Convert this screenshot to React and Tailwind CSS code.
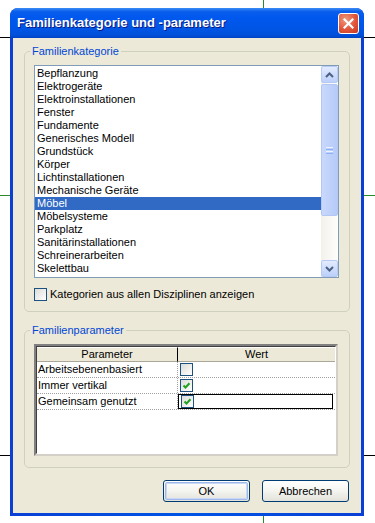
import React from 'react'

const categories = [
  'Bepflanzung',
  'Elektrogeräte',
  'Elektroinstallationen',
  'Fenster',
  'Fundamente',
  'Generisches Modell',
  'Grundstück',
  'Körper',
  'Lichtinstallationen',
  'Mechanische Geräte',
  'Möbel',
  'Möbelsysteme',
  'Parkplatz',
  'Sanitärinstallationen',
  'Schreinerarbeiten',
  'Skelettbau',
]

const params = [
  { name: 'Arbeitsebenenbasiert', checked: false },
  { name: 'Immer vertikal', checked: true },
  { name: 'Gemeinsam genutzt', checked: true, active: true },
]

function CheckBox({ checked }) {
  return (
    <div className="w-[13px] h-[13px] border border-[#1C5180] bg-gradient-to-br from-[#DCDCD7] to-white flex items-center justify-center shrink-0">
      {checked && (
        <svg width="11" height="11" viewBox="0 0 11 11">
          <path d="M2.5 5.5 L4.5 7.5 L8.5 3.2" fill="none" stroke="#21A121" strokeWidth="2" />
        </svg>
      )}
    </div>
  )
}

function ScrollButton({ down }) {
  return (
    <div className="w-[17px] h-[17px] rounded-[2px] border border-[#B7CAF5] bg-gradient-to-b from-[#E3EBFE] to-[#BCD0FA] flex items-center justify-center">
      <svg width="9" height="6" viewBox="0 0 9 6">
        <path d={down ? 'M1 1 L4.5 4.5 L8 1' : 'M1 5 L4.5 1.5 L8 5'} fill="none" stroke="#4D6185" strokeWidth="2" />
      </svg>
    </div>
  )
}

function XpButton({ children, isDefault }) {
  return (
    <button className="w-[87px] h-[22px] rounded-[3px] border border-[#003C74] bg-gradient-to-b from-white via-[#F4F4F0] to-[#E3E2DA] text-[11px] text-black p-[1px]">
      <div className={`w-full h-full rounded-[2px] flex items-center justify-center ${isDefault ? 'border border-[#9DB9EB] shadow-[inset_0_0_0_1px_#C8D7F5]' : ''}`}>
        {children}
      </div>
    </button>
  )
}

export default function App() {
  return (
    <div className="relative w-[375px] h-[523px] bg-white overflow-hidden pt-[8px] pl-[10px] font-['Liberation_Sans',Arial,sans-serif]">
      {/* Zeichenfläche im Hintergrund */}
      <div className="absolute left-0 right-0 top-[37px] h-px bg-black" />
      <div className="absolute left-0 right-0 top-[455px] h-px bg-black" />
      <div className="absolute left-0 right-0 top-[195px] h-px bg-[#2A8A2A]" />
      <div className="absolute top-0 bottom-0 left-[263px] w-px bg-[#2A8A2A]" />

      <div className="relative z-10 w-[354px] h-[508px] flex flex-col rounded-t-[8px] overflow-hidden bg-gradient-to-r from-[#0A3FD6] via-[#0055E5] to-[#0A3FD6]">
        {/* Titelleiste */}
        <div className="h-[30px] shrink-0 flex items-center justify-between pl-[7px] pr-[5px] bg-[linear-gradient(to_bottom,#3C8CF6_0%,#0A5EEC_12%,#0058EE_30%,#0055E5_70%,#0050D8_90%,#0043C4_100%)]">
          <span className="text-white text-[13px] font-bold [text-shadow:1px_1px_0_#0A1883]">
            Familienkategorie und -parameter
          </span>
          <div className="w-[21px] h-[21px] rounded-[3px] border border-white bg-[radial-gradient(circle_at_35%_30%,#F09A7C,#E0553A_55%,#C8391E)] flex items-center justify-center">
            <svg width="11" height="11" viewBox="0 0 11 11">
              <path d="M1.5 1.5 L9.5 9.5 M9.5 1.5 L1.5 9.5" stroke="white" strokeWidth="2.2" strokeLinecap="square" />
            </svg>
          </div>
        </div>

        {/* Inhalt */}
        <div className="flex-1 mx-[3px] mb-[3px] bg-[#ECE9D8] px-[11px] pt-[7px] flex flex-col">
          <fieldset className="border border-[#D0D0BF] rounded-[5px] pl-[9px] pr-[10px] pb-[10px]">
            <legend className="ml-[-4px] px-[2px] text-[11px] leading-[13px] text-[#0046D5]">Familienkategorie</legend>
            <div className="mt-[7px] h-[213px] border border-[#7F9DB9] bg-white flex">
              <div className="flex-1 pt-[1px]">
                {categories.map((c) => (
                  <div
                    key={c}
                    className={`h-[13px] leading-[13px] pl-[2px] text-[11px] ${c === 'Möbel' ? 'bg-[#316AC5] text-white' : 'text-black'}`}
                  >
                    {c}
                  </div>
                ))}
              </div>
              <div className="w-[17px] flex flex-col bg-gradient-to-r from-[#F3F1EC] to-[#FEFEFB]">
                <ScrollButton />
                <div className="mt-[1px] h-[132px] rounded-[2px] border border-[#B2C7F4] bg-gradient-to-r from-[#C9D8FC] to-[#B6CBF9] flex flex-col items-center justify-center gap-[1px]">
                  <div className="w-[7px] h-px bg-[#EEF4FE]" />
                  <div className="w-[7px] h-px bg-[#8CB0F8]" />
                  <div className="w-[7px] h-px bg-[#EEF4FE]" />
                  <div className="w-[7px] h-px bg-[#8CB0F8]" />
                </div>
                <div className="flex-1" />
                <ScrollButton down />
              </div>
            </div>
            <div className="mt-[10px] flex items-center gap-[3px]">
              <CheckBox />
              <span className="text-[11px] leading-[13px] text-black">Kategorien aus allen Disziplinen anzeigen</span>
            </div>
          </fieldset>

          <fieldset className="mt-[12px] border border-[#D0D0BF] rounded-[5px] pl-[9px] pr-[11px] pb-[11px]">
            <legend className="ml-[-4px] px-[2px] text-[11px] leading-[13px] text-[#0046D5]">Familienparameter</legend>
            <div className="mt-[7px] h-[112px] border-2 border-t-[#808080] border-l-[#808080] border-r-[#D4D0C8] border-b-[#D4D0C8] bg-white">
              <div className="h-full border border-t-[#404040] border-l-[#404040] border-r-white border-b-white">
                <div className="h-[15px] flex text-[11px] leading-[13px] text-black bg-[#ECE9D8]">
                  <div className="w-[141px] flex items-center justify-center border-t border-t-white border-b border-b-[#ACA899] border-r border-r-black">
                    Parameter
                  </div>
                  <div className="flex-1 flex items-center justify-center border-t border-t-white border-b border-b-[#ACA899]">
                    Wert
                  </div>
                </div>
                {params.map((p) => (
                  <div key={p.name} className="h-[16px] flex text-[11px] leading-[15px] text-black border-b border-dotted border-b-[#A0A0A0]">
                    <div className="w-[141px] pl-[1px] border-r border-dotted border-r-[#A0A0A0] truncate">{p.name}</div>
                    <div className={`flex-1 flex items-center pl-[2px] ${p.active ? 'border border-black mr-[2px]' : ''}`}>
                      <CheckBox checked={p.checked} />
                    </div>
                  </div>
                ))}
              </div>
            </div>
          </fieldset>

          <div className="mt-[12px] flex justify-end gap-[12px] pr-[1px]">
            <XpButton isDefault>OK</XpButton>
            <XpButton>Abbrechen</XpButton>
          </div>
        </div>
      </div>
    </div>
  )
}
